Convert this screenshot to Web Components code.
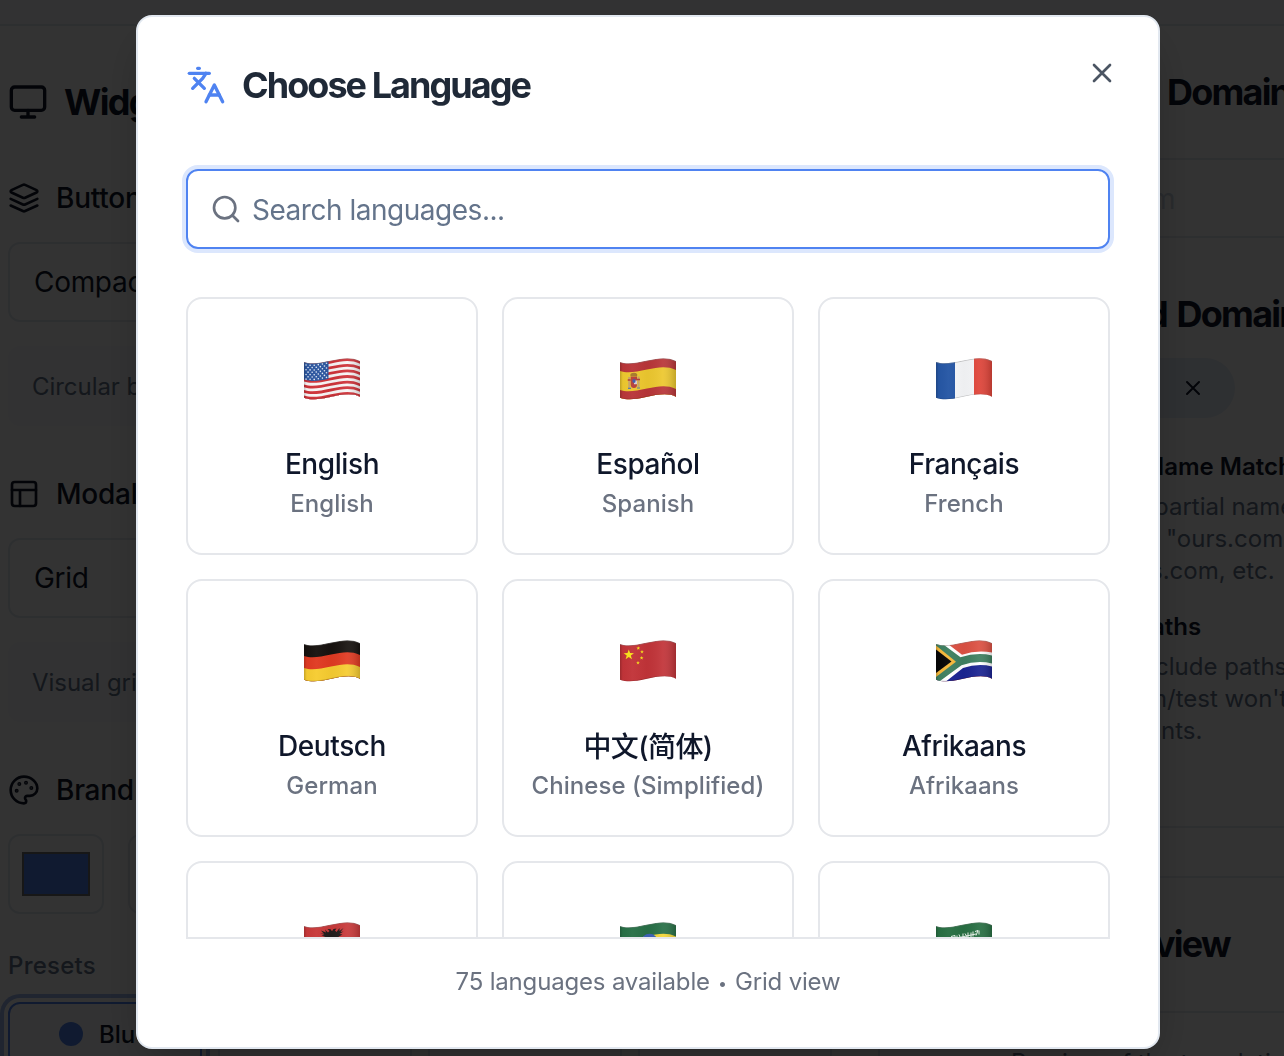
<!DOCTYPE html>
<html lang="en">
<head>
<meta charset="utf-8">
<title>Choose Language</title>
<style>
html,body{margin:0;height:100%;overflow:hidden;background:#fff}
body{font-family:Inter,"Noto Sans CJK SC",sans-serif;color:#0f172a;-webkit-font-smoothing:antialiased}
</style>
</head>
<body>
<language-app></language-app>
<script>
const ICONS = {
  monitor:'<rect width="20" height="14" x="2" y="3" rx="2"/><path d="M8 21h8M12 17v4"/>',
  layers:'<path d="m12.83 2.18a2 2 0 0 0-1.66 0L2.6 6.08a1 1 0 0 0 0 1.83l8.58 3.91a2 2 0 0 0 1.66 0l8.58-3.9a1 1 0 0 0 0-1.83Z"/><path d="m22 17.65-9.17 4.16a2 2 0 0 1-1.66 0L2 17.65"/><path d="m22 12.65-9.17 4.16a2 2 0 0 1-1.66 0L2 12.65"/>',
  layout:'<rect width="18" height="18" x="3" y="3" rx="2"/><path d="M3 9h18M9 21V9"/>',
  palette:'<g fill="currentColor"><circle cx="13.5" cy="6.5" r=".5"/><circle cx="17.5" cy="10.5" r=".5"/><circle cx="8.5" cy="7.5" r=".5"/><circle cx="6.5" cy="12.5" r=".5"/></g><path d="M12 2C6.5 2 2 6.5 2 12s4.5 10 10 10c.926 0 1.648-.746 1.648-1.688 0-.437-.18-.835-.437-1.125-.29-.289-.438-.652-.438-1.125a1.64 1.64 0 0 1 1.668-1.668h1.996c3.051 0 5.555-2.503 5.555-5.554C21.965 6.012 17.461 2 12 2z"/>',
  languages:'<path d="m5 8 6 6"/><path d="m4 14 6-6 2-3"/><path d="M2 5h12"/><path d="M7 2h1"/><path d="m22 22-5-10-5 10"/><path d="M14 18h6"/>',
  search:'<circle cx="11" cy="11" r="8"/><path d="m21 21-4.3-4.3"/>',
  x:'<path d="M18 6 6 18M6 6l12 12"/>'
};
const wave = y => `M0 ${y+4}C7 ${y+6.4} 16 ${y+5} 27 ${y+2.6}S47 ${y-1.2} 56 ${y+3}`;
const band = (y,c) => `<path d="${wave(y)}V60H0Z" fill="${c}"/>`;
const star = (x,y,r) => { let p=''; for(let i=0;i<10;i++){const a=Math.PI*i/5-Math.PI/2,q=i%2?r*.4:r;p+=(x+q*Math.cos(a)).toFixed(2)+','+(y+q*Math.sin(a)).toFixed(2)+' ';} return `<polygon points="${p}" fill="#f8e11b"/>`; };
const FLAGS = {
  us(){ let s=''; for(let i=0;i<13;i++) s+=band(i*2.8,i%2?'#f8f5f5':'#cf3339');
    s+='<path d="M0 4C7 6.4 15 5.200 24.500 3V20.800C16 23.300 7 23.800 0 21.500Z" fill="#2c569f"/>';
    for(let r=0;r<7;r++) for(let c=0;c<(r%2?5:6);c++){const x=2+c*4.1+(r%2?2.05:0);s+=`<circle cx="${x}" cy="${7+r*2.35-(x>12?(x-12)*.16:-x*.03)}" r=".8" fill="#e4ecf8"/>`;}
    return s; },
  es(){ return band(0,'#b93639')+band(9,'#edc82f')+band(28,'#b93639')+
    '<rect x="8.200" y="19" width="2" height="11" fill="#c8a36a"/><rect x="17.500" y="18.500" width="2" height="11" fill="#c8a36a"/><path d="M7.700 22h3M17 21.500h3" stroke="#b53b35" stroke-width="1.500"/><path d="M10.700 18.500h6.300v8q0 3.500-3.100 3.500t-3.200-3.500Z" fill="#b6403a"/><path d="M14 22.500h3v3.800h-3Z" fill="#d9cdd2"/><ellipse cx="14" cy="23" rx="1.600" ry="2" fill="#3f5da8"/><path d="M10.500 18.300q-1-3.500 3.300-3.600 4.500.1 3.200 3.600Z" fill="#a77a2a"/><path d="M8 30.300h3M17 30h3" stroke="#567fa5" stroke-width="1.200"/>'; },
  fr(){ return '<path d="M0 0h19v46H0Z" fill="#2657a5"/><path d="M19 0h19v46H19Z" fill="#f5f6f8"/><path d="M38 0h18v46H38Z" fill="#df4439"/>'; },
  de(){ return band(0,'#17120f')+band(12,'#e03a22')+band(24,'#f6cc31'); },
  cn(){ return band(0,'#c23439')+star(8.800,14.800,5.4)+star(18.300,8.200,2)+star(22,11.800,2)+star(21.600,18,2)+star(18,22.800,2); },
  za(){ return band(0,'#dc5143')+band(18,'#1b2492')+
    '<path d="M8 1 26 14.800Q41 9.500 56 12.500V26.500Q42 23 27 28L8 43H0V0Z" fill="#fff"/><path d="M4 2 24.500 17.200Q41 12 56 15.500V23.500Q41 20 25.500 25.300L4 41H0V1Z" fill="#3f8061"/><path d="M0 5.500 20 21.800 0 37Z" fill="#f5b83b"/><path d="M0 9.500 15.500 21.600 0 33Z" fill="#080707"/>'; },
  al(){ return band(0,'#c8393a')+'<path d="M16 11l4 1-3-3.500 5 2-1-3 3 3 1.500-1.500-2-2 3 .3 1.500 2 1.500-2.200 3-.7-1.500 2 1.500 1.500 3-4v3l4-3-3 4 3-.5-4 2.500 3 .5-5 3 2 2-8 2-7-2 2-2-5-2 3-.5Z" fill="#211c1c"/>'; },
  et(){ return band(0,'#287047')+band(11.500,'#f3d638')+band(24,'#d33732')+'<circle cx="29.500" cy="20.300" r="8.500" fill="#3e62b8"/><path d="M28 15.500v3m3-3v4m-7 1h12" stroke="#edce48" stroke-width="1"/>'; },
  sa(){ return band(0,'#286f43')+'<path d="M15 14.500l4-1v4m2-4v4m2-5 2 5m2-6v6m2-6 3 5m0-6v5m3-5v5m2-6v5m2-5 3-1-2 5m3-5v4M16 17l24-5" stroke="#e8f3ea" stroke-width="1" fill="none"/>'; }
};

class Base extends HTMLElement {
  constructor(){ super(); this.attachShadow({mode:'open'}); }
  connectedCallback(){ this.shadowRoot.innerHTML = `<style>*{box-sizing:border-box}:host{box-sizing:border-box}${this.css()}</style>${this.html()}`; }
  css(){ return ''; } html(){ return '<slot></slot>'; }
}
customElements.define('ui-icon', class extends Base {
  css(){ return `:host{display:block;flex:none;width:${this.getAttribute('size')}px;height:${this.getAttribute('size')}px}svg{display:block;width:100%;height:100%}`; }
  html(){ return `<svg viewBox="0 0 24 24" fill="none" stroke="currentColor" stroke-width="${this.getAttribute('stroke')||2}" stroke-linecap="round" stroke-linejoin="round">${ICONS[this.getAttribute('name')]}</svg>`; }
});
customElements.define('flag-icon', class extends Base {
  css(){ return ':host{display:block;width:56px;height:42px}svg{display:block}'; }
  html(){ return `<svg width="56" height="42" viewBox="0 0 56 42"><defs><clipPath id="c"><path d="${wave(0)}V38.700C48 34.600 37 36.600 26 39.100S7 42.300 0 39.800Z"/></clipPath><linearGradient id="g"><stop offset="0" stop-opacity=".2"/><stop offset=".05" stop-opacity=".02"/><stop offset=".22" stop-color="#fff" stop-opacity=".03"/><stop offset=".48" stop-opacity=".03"/><stop offset=".76" stop-color="#fff" stop-opacity=".06"/><stop offset="1" stop-opacity=".18"/></linearGradient></defs><g clip-path="url(#c)">${FLAGS[this.getAttribute('code')]()}<rect width="56" height="42" fill="url(#g)"/><path d="${wave(.3)}" fill="none" stroke="#888" stroke-opacity=".45"/><path d="${wave(36)}" fill="none" stroke="#000" stroke-opacity=".18"/></g></svg>`; }
});
customElements.define('language-card', class extends Base {
  css(){ return `:host{display:flex;flex-direction:column;align-items:center;height:258px;border:2px solid #e5e7eb;border-radius:16px;padding-top:59px;background:#fff}
  .n{margin-top:44px;font:540 28px/40px Inter,"Noto Sans CJK SC",sans-serif;letter-spacing:-.42px;color:#0f172a;white-space:nowrap}
  .s{margin-top:4px;font-size:24px;line-height:32px;font-weight:500;color:#6b7280;letter-spacing:.05px;white-space:nowrap}
  :host([cjk]) .n{font-weight:500;letter-spacing:-.6px;padding-top:1px;margin-bottom:-1px}`; }
  html(){ return '<slot name="flag"></slot><div class="n"><slot></slot></div><div class="s"><slot name="sub"></slot></div>'; }
});
customElements.define('search-field', class extends Base {
  css(){ return `:host{display:flex;align-items:center;gap:10px;height:80px;padding:0 22px;border:2px solid #4f83f1;border-radius:12px;box-shadow:0 0 0 4px #dce7fd;font-size:28px;font-weight:430;color:#64748b;letter-spacing:-.48px}ui-icon{color:#6b7280}span{padding-top:2px}`; }
  html(){ return '<ui-icon name="search" size="32"></ui-icon><span><slot></slot></span>'; }
});
const LANGS=[['us','English','English'],['es','Español','Spanish'],['fr','Français','French'],['de','Deutsch','German'],['cn','中文(简体)','Chinese (Simplified)'],['za','Afrikaans','Afrikaans'],['al'],['et'],['sa']];
customElements.define('language-dialog', class extends Base {
  css(){ return `:host{position:fixed;left:136px;top:15px;width:1024px;height:1034px;display:flex;flex-direction:column;padding:46px 48px 48px;border:2px solid #e2e8f0;border-radius:16px;background:#fff;box-shadow:0 20px 50px -12px rgba(0,0,0,.3)}
  header{display:flex;justify-content:space-between;height:44px;flex:none;margin-bottom:62px}
  h2{display:flex;align-items:center;gap:16px;margin:0;font-size:36px;line-height:44px;font-weight:650;letter-spacing:-1.95px;color:#1f2937}
  h2 ui-icon{color:#4f83f1}.close{color:#4b5563;margin:-6px -8px 0 0}
  .grid{display:grid;grid-template-columns:repeat(3,1fr);gap:24px;margin-top:48px;height:640px;overflow:hidden;flex:none}
  footer{border-top:2px solid #e5e7eb;padding-top:27px;text-align:center;font-size:24px;line-height:32px;font-weight:430;color:#6b7280;letter-spacing:-.18px}
  footer span{font-size:16px;letter-spacing:0;vertical-align:1px;padding:0 1.5px}`; }
  html(){ return `<header><h2><ui-icon name="languages" size="40"></ui-icon><span>Choose Language</span></h2><ui-icon class="close" name="x" size="32"></ui-icon></header>
  <search-field>Search languages...</search-field>
  <div class="grid">${LANGS.map(([f,n,s])=>`<language-card${f==='cn'?' cjk':''}><flag-icon slot="flag" code="${f}"></flag-icon>${n?`${n}<span slot="sub">${s}</span>`:''}</language-card>`).join('')}</div>
  <footer>75 languages available <span>•</span> Grid view</footer>`; }
});
customElements.define('setting-title', class extends Base {
  css(){ return `:host{display:flex;align-items:center;flex:none;height:40px;gap:16px;font-size:28px;font-weight:540;white-space:nowrap;letter-spacing:-.25px}:host([large]){font-size:36px;font-weight:650;letter-spacing:-1.7px;gap:16px}`; }
});
customElements.define('settings-column', class extends Base {
  css(){ return `:host{display:flex;flex-direction:column;width:880px;height:1056px;padding-left:8px;border-right:2px solid #e2e8f0;overflow:hidden}
  .a{margin-top:56px}.b{margin-top:56px}.c{margin-top:48px}
  .select{height:80px;flex:none;margin-top:24px;width:600px;border:2px solid #e2e8f0;border-radius:12px;font-size:28px;line-height:76px;padding-left:24px;letter-spacing:-.3px}
  .note{height:80px;flex:none;margin-top:24px;width:600px;border-radius:12px;background:#f8fafc;font-size:24px;line-height:82px;padding-left:24px;color:#64748b;letter-spacing:-.05px}
  .row{display:flex;gap:24px;margin-top:24px;flex:none}.row div{width:96px;height:80px;border:2px solid #e2e8f0;border-radius:12px;padding:16px 12px}.row div+div{width:480px}
  i{display:block;width:68px;height:44px;background:#4f83f1;border:2px solid #767676}
  .p{font-size:24px;font-weight:500;line-height:32px;color:#64748b;margin-top:36px;letter-spacing:.01em}
  .presets{display:flex;gap:16px;margin-top:20px}.presets div{display:flex;align-items:center;gap:16px;width:194px;height:64px;flex:none;border:2px solid #e2e8f0;border-radius:12px;padding-left:49px;font-size:24px;font-weight:500}.presets .on{border-color:#4f83f1;background:#f8fafc;box-shadow:0 0 0 4px #fff,0 0 0 8px #9fb9ee}b{width:24px;height:24px;border-radius:50%;background:#4f83f1}`; }
  html(){ return `<setting-title large class="a"><ui-icon name="monitor" size="40"></ui-icon>Widget</setting-title>
  <setting-title class="b"><ui-icon name="layers" size="32"></ui-icon>Button</setting-title><div class="select">Compact</div><div class="note">Circular b</div>
  <setting-title class="c"><ui-icon name="layout" size="32"></ui-icon>Modal</setting-title><div class="select">Grid</div><div class="note">Visual gri</div>
  <setting-title class="c"><ui-icon name="palette" size="32"></ui-icon>Brand</setting-title>
  <div class="row"><div><i></i></div><div></div></div><div class="p">Presets</div>
  <div class="presets"><div class="on"><b></b>Blue</div><div></div><div></div><div></div></div>`; }
});
customElements.define('domain-column', class extends Base {
  css(){ return `:host{display:flex;flex-direction:column;flex:1;min-width:0;height:1056px;overflow:hidden;white-space:nowrap;font-size:24px;line-height:32px;color:#64748b;letter-spacing:0}
  div{flex:none}
  h3{margin:0;flex:none;font-size:36px;line-height:44px;font-weight:650;letter-spacing:-1.8px;color:#0f172a}
  h4{margin:0;flex:none;font-size:24px;line-height:32px;font-weight:600;color:#0f172a}
  .head{height:132px;padding:44px 0 0 287px}
  .input{height:80px;border:solid #e2e8f0;border-width:2px 0;font-size:28px;line-height:78px;color:#cbd5e1;padding-left:271px}
  .pill{display:flex;align-items:center;justify-content:flex-end;width:255px;height:60px;margin:22px 0 0 100px;border-radius:30px;background:#e6eef8;color:#0f172a;padding-right:30px}
  .line{height:2px;background:#e2e8f0}`; }
  html(){ return `<div class="head"><h3>Domain</h3></div><div class="input">m</div>
  <h3 style="padding-left:266px;margin-top:54px;word-spacing:3px">d Domains</h3><div class="pill"><ui-icon name="x" size="24"></ui-icon></div>
  <h4 style="padding-left:266px;margin-top:33px">Name Match</h4>
  <div style="padding-left:274px;margin-top:8px">partial names</div><div style="padding-left:286px">"ours.com"</div><div style="padding-left:270px">s.com, etc.</div>
  <h4 style="padding-left:271px;margin-top:24px">aths</h4>
  <div style="padding-left:275px;margin-top:8px">clude paths</div><div style="padding-left:266px">m/test won't</div><div style="padding-left:281px">nts.</div>
  <div class="line" style="margin-top:79px"></div><div class="line" style="margin-top:48px"></div>
  <h3 style="padding-left:274px;margin-top:44px">view</h3><div class="line" style="margin-top:45px"></div>
  <div style="padding-left:131px;margin-top:34px">Preview of the translation</div>`; }
});
customElements.define('language-app', class extends Base {
  css(){ return `:host{display:block;height:1056px;overflow:hidden}.top{height:26px;background:#f8fafc;border-bottom:2px solid #e2e8f0}.page{display:flex;height:1030px;overflow:hidden}.shade{position:fixed;inset:0;background:rgba(0,0,0,.8)}`; }
  html(){ return '<div class="top"></div><div class="page"><settings-column></settings-column><domain-column></domain-column></div><div class="shade"></div><language-dialog></language-dialog>'; }
});
</script>
</body>
</html>
